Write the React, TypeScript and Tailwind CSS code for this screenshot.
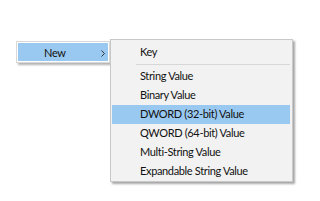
const items = [
  'String Value',
  'Binary Value',
  'DWORD (32-bit) Value',
  'QWORD (64-bit) Value',
  'Multi-String Value',
  'Expandable String Value',
];

export default function App() {
  return (
    <div
      className="w-[320px] h-[201px] bg-white flex items-start pl-[16px] pt-[39px] text-[11px] tracking-[-0.35px] text-[#111]"
      style={{ fontFamily: 'Lato, "Noto Sans", sans-serif' }}
    >
      {/* Parent menu item */}
      <div className="mt-[2px] w-[94px] h-[22px] border border-[#d9d9d9] bg-white shadow-[2px_2px_2px_rgba(0,0,0,0.3)] p-[1px]">
        <div className="h-full bg-[#99c9f0] flex items-center relative">
          <span className="pl-[26px] leading-none">New</span>
          <svg className="absolute left-[83px] top-[7px]" width="4" height="7" viewBox="0 0 4 7">
            <path d="M0.5 0.5 L3.5 3.5 L0.5 6.5" fill="none" stroke="#333" strokeWidth="1" />
          </svg>
        </div>
      </div>

      {/* Submenu */}
      <div className="w-[183px] h-[143px] border border-[#c8c8c8] bg-[#f2f2f2] shadow-[2px_2px_2px_rgba(0,0,0,0.35)] pt-[3px] flex flex-col">
        <div className="h-[19px] flex items-center pl-[29px]">Key</div>
        <div className="h-[5px] flex items-center pl-[25px] pr-[2px]">
          <div className="h-px w-full bg-[#d7d7d7]" />
        </div>
        {items.map((label) => (
          <div
            key={label}
            className={`h-[19px] flex items-center pl-[28px] ml-[1px] mr-[2px] ${
              label.startsWith('DWORD') ? 'bg-[#99c9f0]' : ''
            }`}
          >
            {label}
          </div>
        ))}
      </div>
    </div>
  );
}
